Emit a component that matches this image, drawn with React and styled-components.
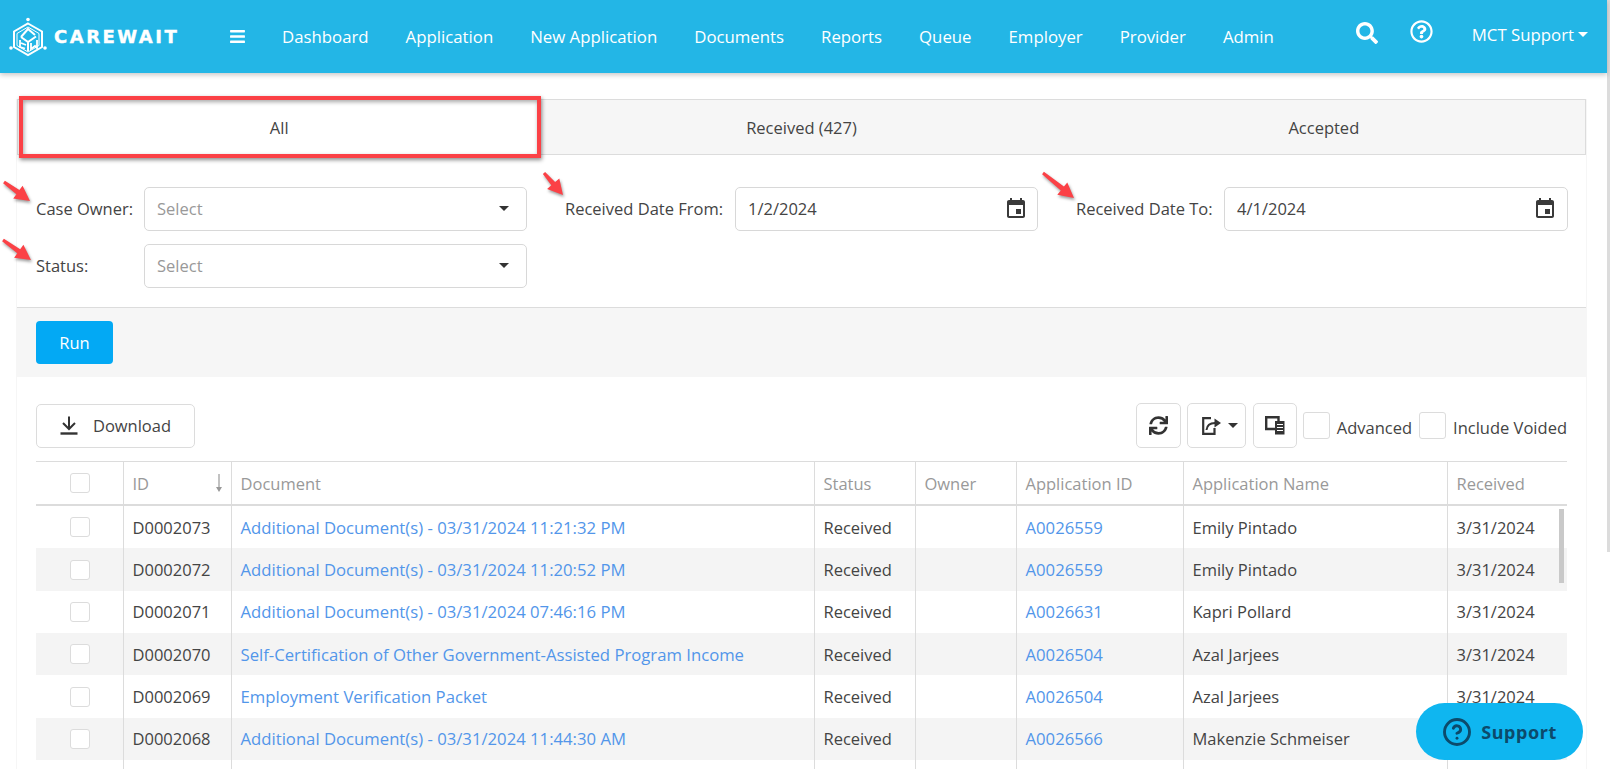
import React from "react";
import styled, { createGlobalStyle } from "styled-components";
import { FaBars, FaSearch, FaRegQuestionCircle, FaSync } from "react-icons/fa";
import { CircleHelp } from "lucide-react";

const GlobalStyle = createGlobalStyle`
  html, body {
    margin: 0;
    height: 769px;
    overflow: hidden;
    background: #fff;
  }
  body {
    font-family: "Open Sans", "Noto Sans", sans-serif;
    font-size: 16.5px;
    color: #444;
  }
  * {
    box-sizing: border-box;
  }
`;

const Shell = styled.div`
  display: flex;
  position: relative;
  height: 769px;
  overflow: hidden;
`;

const Page = styled.div`
  width: 1607px;
  flex: none;
`;

const PageScroll = styled.div`
  flex: 1;
  background: linear-gradient(#dcdcdc 552px, #fff 552px);
`;

const Header = styled.header`
  display: flex;
  align-items: center;
  height: 73px;
  padding: 0 19px 0 9px;
  background: #23b6e6;
  color: #fff;
  box-shadow: 0 2px 5px rgba(0, 0, 0, 0.22);
  position: relative;
`;

const Brand = styled.div`
  display: flex;
  align-items: center;
  width: 220px;
`;

const BrandName = styled.span`
  margin-left: 7px;
  font-family: "DejaVu Sans", sans-serif;
  font-size: 18px;
  font-weight: 700;
  letter-spacing: 2.5px;
  -webkit-text-stroke: 0.4px #fff;
`;

const Burger = styled.span`
  display: flex;
  font-size: 17px;
  margin-right: 36px;
`;

const Nav = styled.nav`
  display: flex;
  gap: 37px;
  font-size: 16.8px;
`;

const HeaderRight = styled.div`
  display: flex;
  align-items: center;
  margin-left: auto;
  padding-bottom: 5px;
  font-size: 16.8px;
`;

const HeaderIcon = styled.span`
  display: flex;
  margin-right: ${(p) => p.$gap}px;
  transform: translateY(${(p) => p.$shift}px);
`;

const Caret = styled.span`
  display: inline-block;
  width: 0;
  height: 0;
  margin-left: ${(p) => p.$gap || 4}px;
  border-top: 5px solid ${(p) => p.$color || "#fff"};
  border-left: 5px solid transparent;
  border-right: 5px solid transparent;
`;

const Main = styled.main`
  margin: 26px 20px 0 16px;
  border-left: 1px solid #f6f6f6;
  border-right: 1px solid #f6f6f6;
  height: 670px;
`;

const Tabs = styled.div`
  display: grid;
  grid-template-columns: repeat(3, 1fr);
  height: 56px;
  background: #f6f6f6;
  border: 1px solid #dcdcdc;
`;

const Tab = styled.div`
  display: flex;
  align-items: center;
  justify-content: center;
  position: relative;
  background: ${(p) => (p.$active ? "#fff" : "transparent")};
`;

const RedBox = styled.div`
  position: absolute;
  inset: -4px -1px -4px 1px;
  border: 4px solid #fb4146;
  box-shadow: 1px 2px 4px rgba(0, 0, 0, 0.45), inset 1px 2px 4px rgba(0, 0, 0, 0.35);
`;

const Filters = styled.section`
  display: flex;
  flex-direction: column;
  gap: 13px;
  padding: 32px 0 19px 19px;
  border-bottom: 1px solid #dcdcdc;
`;

const FilterRow = styled.div`
  display: flex;
  gap: 38px;
`;

const Field = styled.div`
  display: flex;
  align-items: center;
`;

const Label = styled.label`
  width: ${(p) => p.$width}px;
  flex: none;
  padding-bottom: 1px;
`;

const Control = styled.div`
  display: flex;
  align-items: center;
  justify-content: space-between;
  width: ${(p) => p.$width}px;
  height: 44px;
  padding: 0 ${(p) => p.$right}px 1px 12px;
  border: 1px solid #d8d8d8;
  border-radius: 5px;
  background: #fff;
  color: ${(p) => (p.$placeholder ? "#999" : "#444")};
`;

const RunBar = styled.div`
  height: 69px;
  padding: 13px 19px;
  background: #f6f6f6;
`;

const RunButton = styled.button`
  width: 77px;
  height: 43px;
  border: 0;
  border-radius: 4px;
  background: #03a9f4;
  color: #fff;
  font: inherit;
  font-weight: 500;
`;

const Content = styled.div`
  padding: 26px 19px 0;
`;

const Toolbar = styled.div`
  display: flex;
  align-items: center;
  height: 45px;
  margin-bottom: 13px;
`;

const ToolGroup = styled.div`
  display: flex;
  align-items: center;
  margin-left: auto;
`;

const OutlineButton = styled.button`
  display: flex;
  align-items: center;
  justify-content: center;
  flex: none;
  width: ${(p) => p.$width}px;
  height: 45px;
  margin-right: ${(p) => p.$gap || 0}px;
  padding: 0 0 0 ${(p) => p.$inset || 0}px;
  border: 1px solid #dcdcdc;
  border-radius: 5px;
  background: #fff;
  color: #333;
  font: inherit;
`;

const DownloadButton = styled(OutlineButton)`
  height: 44px;
  color: #444;
  gap: 15px;
`;

const CheckBox = styled.input.attrs({ type: "checkbox" })`
  appearance: none;
  flex: none;
  width: ${(p) => p.$size}px;
  height: ${(p) => p.$size}px;
  margin: 0;
  border: 1px solid #dcdcdc;
  border-radius: 3px;
  background: #fff;
`;

const CheckLabel = styled.span`
  margin: 0 ${(p) => p.$gap}px 0 7px;
  padding-top: 3px;
`;

const Table = styled.div`
  border-top: 1px solid #dcdcdc;
  position: relative;
`;

const COLUMNS = "87px 108px 583px 101px 101px 167px 264px 121px";

const HeadRow = styled.div`
  display: grid;
  grid-template-columns: ${COLUMNS};
  height: 44px;
  border-bottom: 2px solid #dcdcdc;
  color: #999;
`;

const Row = styled.div`
  display: grid;
  grid-template-columns: ${COLUMNS};
  height: 42.35px;
  background: ${(p) => (p.$odd ? "#f4f4f4" : "#fff")};
`;

const Cell = styled.div`
  display: flex;
  align-items: center;
  justify-content: ${(p) => (p.$center ? "center" : "flex-start")};
  padding: 0 8.5px;
  border-left: ${(p) => (p.$first ? "0" : "1px solid #dcdcdc")};
  white-space: nowrap;
  overflow: hidden;
`;

const HeadCell = styled(Cell)`
  justify-content: ${(p) => (p.$center ? "center" : "space-between")};
`;

const DocLink = styled.a`
  color: #5296ea;
  font-size: 16.7px;
  text-decoration: none;
`;

const TableThumb = styled.div`
  position: absolute;
  top: 47px;
  right: 3px;
  width: 5px;
  height: 74px;
  background: #c9c9c9;
`;

const Annotations = styled.svg`
  position: absolute;
  inset: 0;
  pointer-events: none;
  filter: drop-shadow(1px 2px 1.5px rgba(0, 0, 0, 0.4));
`;

const SupportButton = styled.button`
  position: absolute;
  left: 1416px;
  top: 703px;
  display: flex;
  align-items: center;
  justify-content: center;
  gap: 9px;
  width: 167px;
  height: 57px;
  border: 0;
  border-radius: 29px;
  background: #0fb6f0;
  color: #0c4a6b;
  font-family: "Noto Sans", sans-serif;
  font-size: 18px;
  font-weight: 700;
  letter-spacing: 0.6px;
`;

const Logo = () => (
  <svg width="38" height="40" viewBox="0 0 38 40" fill="none" stroke="#fff">
    <circle cx="19" cy="2.5" r="1.8" fill="#fff" stroke="none" />
    <circle cx="2" cy="31" r="1.8" fill="#fff" stroke="none" />
    <circle cx="36" cy="31" r="1.8" fill="#fff" stroke="none" />
    <path d="M19 6.5L33 14.5V30L19 38L5 30V14.5Z" strokeWidth="2" />
    <path d="M19 10L30 16.5V28.5L19 35L8 28.5V16.5Z" strokeWidth="1" />
    <path d="M12 20L19 12L26 18M12 20L19 25L27 19.5M19 25V34" strokeWidth="2" />
    <path d="M11 23V30L16 31.5M17 28L12 26M22 26V32L26 29L28 31V23" strokeWidth="1.8" />
  </svg>
);

const CalendarIcon = () => (
  <svg width="24" height="24" viewBox="0 0 24 24" fill="#3a3a3a">
    <path d="M17 12h-5v5h5v-5zM16 1v2H8V1H6v2H5c-1.11 0-1.99.9-1.99 2L3 19c0 1.1.89 2 2 2h14c1.1 0 2-.9 2-2V5c0-1.1-.9-2-2-2h-1V1h-2zm3 18H5V8h14v11z" />
  </svg>
);

const DownloadIcon = () => (
  <svg width="18" height="19" viewBox="0 0 18 19" fill="none" stroke="#333" strokeWidth="2">
    <path d="M9 0.5V12.5M3 7L9 13L15 7" />
    <path d="M0.5 17.5H17.5" strokeWidth="2.4" />
  </svg>
);

const ExportIcon = () => (
  <svg width="20" height="18" viewBox="0 0 20 18" fill="none" stroke="#333" strokeWidth="2.2">
    <path d="M9 1.2H1.2V16.8H12.5V11" />
    <path d="M4.5 13C5 8 8 6 13 6" strokeWidth="2" />
    <path d="M12.5 1.5L19 6L12.5 10.5Z" fill="#333" stroke="none" />
  </svg>
);

const ColumnsIcon = () => (
  <svg width="20" height="19" viewBox="0 0 20 19" fill="none">
    <path d="M1.2 1.2H13.5V13H1.2Z" stroke="#333" strokeWidth="2.4" />
    <path d="M10 5H19.5V18.5H10Z" fill="#333" />
    <path d="M12 8.5H18M12 11.5H18M12 14.5H18" stroke="#fff" strokeWidth="1" />
  </svg>
);

const SortArrow = () => (
  <svg width="8" height="19" viewBox="0 0 8 19" fill="#999">
    <path d="M3.4 0H4.6V14H3.4Z" />
    <path d="M1 13H7L4 18Z" />
  </svg>
);

const Arrow = ({ x1, y1, x2, y2 }) => {
  const len = Math.hypot(x2 - x1, y2 - y1);
  const ux = (x2 - x1) / len;
  const uy = (y2 - y1) / len;
  const px = -uy;
  const py = ux;
  const bx = x2 - ux * 15;
  const by = y2 - uy * 15;
  const pt = (x, y) => `${x.toFixed(1)},${y.toFixed(1)}`;
  const points = [
    pt(x1 + px * 1.5, y1 + py * 1.5),
    pt(bx + px * 2.5, by + py * 2.5),
    pt(bx + px * 8, by + py * 8),
    pt(x2, y2),
    pt(bx - px * 8, by - py * 8),
    pt(bx - px * 2.5, by - py * 2.5),
    pt(x1 - px * 1.5, y1 - py * 1.5)
  ];
  return <polygon points={points.join(" ")} fill="#fb4146" />;
};

const navItems = [
  "Dashboard",
  "Application",
  "New Application",
  "Documents",
  "Reports",
  "Queue",
  "Employer",
  "Provider",
  "Admin"
];

const rows = [
  ["D0002073", "Additional Document(s) - 03/31/2024 11:21:32 PM", "A0026559", "Emily Pintado"],
  ["D0002072", "Additional Document(s) - 03/31/2024 11:20:52 PM", "A0026559", "Emily Pintado"],
  ["D0002071", "Additional Document(s) - 03/31/2024 07:46:16 PM", "A0026631", "Kapri Pollard"],
  ["D0002070", "Self-Certification of Other Government-Assisted Program Income", "A0026504", "Azal Jarjees"],
  ["D0002069", "Employment Verification Packet", "A0026504", "Azal Jarjees"],
  ["D0002068", "Additional Document(s) - 03/31/2024 11:44:30 AM", "A0026566", "Makenzie Schmeiser"]
];

const arrows = [
  { x1: 4, y1: 182, x2: 30, y2: 201 },
  { x1: 3, y1: 240, x2: 31, y2: 260 },
  { x1: 544, y1: 173, x2: 563, y2: 195 },
  { x1: 1043, y1: 173, x2: 1074, y2: 198 }
];

const App = () => {
  return (
    <Shell>
      <GlobalStyle />
      <Page>
        <Header>
          <Brand>
            <Logo />
            <BrandName>CAREWAIT</BrandName>
          </Brand>
          <Burger>
            <FaBars />
          </Burger>
          <Nav>
            {navItems.map((item) => (
              <span key={item}>{item}</span>
            ))}
          </Nav>
          <HeaderRight>
            <HeaderIcon $gap={32} $shift={-1}>
              <FaSearch size={22} />
            </HeaderIcon>
            <HeaderIcon $gap={39} $shift={-3}>
              <FaRegQuestionCircle size={23} />
            </HeaderIcon>
            MCT Support
            <Caret />
          </HeaderRight>
        </Header>
        <Main>
          <Tabs>
            <Tab $active>
              All
              <RedBox />
            </Tab>
            <Tab>Received (427)</Tab>
            <Tab>Accepted</Tab>
          </Tabs>
          <Filters>
            <FilterRow>
              <Field>
                <Label $width={108}>Case Owner:</Label>
                <Control $width={383} $right={17} $placeholder>
                  Select
                  <Caret $color="#333" />
                </Control>
              </Field>
              <Field>
                <Label $width={170}>Received Date From:</Label>
                <Control $width={303} $right={9}>
                  1/2/2024
                  <CalendarIcon />
                </Control>
              </Field>
              <Field>
                <Label $width={148}>Received Date To:</Label>
                <Control $width={344} $right={10}>
                  4/1/2024
                  <CalendarIcon />
                </Control>
              </Field>
            </FilterRow>
            <FilterRow>
              <Field>
                <Label $width={108}>Status:</Label>
                <Control $width={383} $right={17} $placeholder>
                  Select
                  <Caret $color="#333" />
                </Control>
              </Field>
            </FilterRow>
          </Filters>
          <RunBar>
            <RunButton>Run</RunButton>
          </RunBar>
          <Content>
            <Toolbar>
              <DownloadButton $width={159}>
                <DownloadIcon />
                Download
              </DownloadButton>
              <ToolGroup>
                <OutlineButton $width={45} $gap={6}>
                  <FaSync size={19} />
                </OutlineButton>
                <OutlineButton $width={59} $gap={7} $inset={7}>
                  <ExportIcon />
                  <Caret $color="#333" $gap={6} />
                </OutlineButton>
                <OutlineButton $width={44} $gap={6}>
                  <ColumnsIcon />
                </OutlineButton>
                <CheckBox $size={27} />
                <CheckLabel $gap={7}>Advanced</CheckLabel>
                <CheckBox $size={27} />
                <CheckLabel $gap={0}>Include Voided</CheckLabel>
              </ToolGroup>
            </Toolbar>
            <Table>
              <HeadRow>
                <HeadCell $first $center>
                  <CheckBox $size={20} />
                </HeadCell>
                <HeadCell>
                  ID
                  <SortArrow />
                </HeadCell>
                <HeadCell>Document</HeadCell>
                <HeadCell>Status</HeadCell>
                <HeadCell>Owner</HeadCell>
                <HeadCell>Application ID</HeadCell>
                <HeadCell>Application Name</HeadCell>
                <HeadCell>Received</HeadCell>
              </HeadRow>
              {rows.map((row, i) => (
                <Row key={row[0]} $odd={i % 2 === 1}>
                  <Cell $first $center>
                    <CheckBox $size={20} />
                  </Cell>
                  <Cell>{row[0]}</Cell>
                  <Cell>
                    <DocLink>{row[1]}</DocLink>
                  </Cell>
                  <Cell>Received</Cell>
                  <Cell />
                  <Cell>
                    <DocLink>{row[2]}</DocLink>
                  </Cell>
                  <Cell>{row[3]}</Cell>
                  <Cell>3/31/2024</Cell>
                </Row>
              ))}
              <Row>
                <Cell $first />
                <Cell />
                <Cell />
                <Cell />
                <Cell />
                <Cell />
                <Cell />
                <Cell />
              </Row>
              <TableThumb />
            </Table>
          </Content>
        </Main>
      </Page>
      <PageScroll />
      <Annotations width="1610" height="769">
        {arrows.map((a) => (
          <Arrow key={a.x1 + "-" + a.y1} {...a} />
        ))}
      </Annotations>
      <SupportButton>
        <CircleHelp size={30} strokeWidth={2.3} />
        Support
      </SupportButton>
    </Shell>
  );
};

export default App;
